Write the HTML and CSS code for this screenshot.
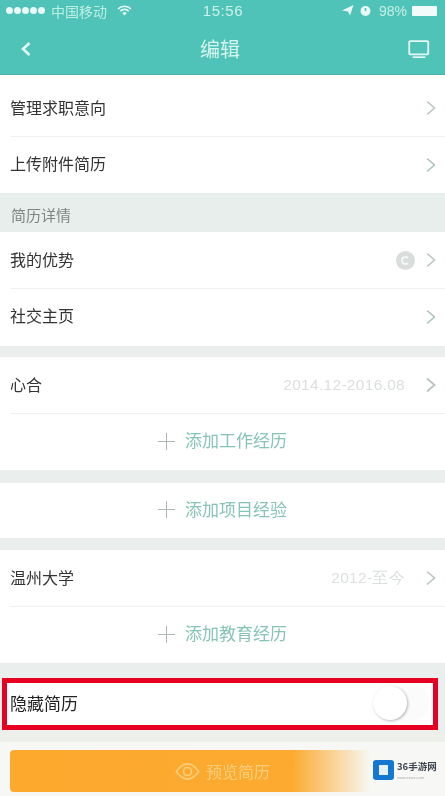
FILE: index.html
```html
<!DOCTYPE html>
<html lang="zh">
<head>
<meta charset="utf-8">
<title>编辑</title>
<link rel="stylesheet" href="styles.css">
</head>
<body>
<div class="page">
  <header class="top">
    <div class="status">
      <div class="status-left">
        <span class="dots"><i></i><i></i><i></i><i></i><i></i></span>
        <span class="carrier">中国移动</span>
        <svg class="wifi" width="15" height="11" viewBox="0 0 15 11"><path d="M1 4a9 9 0 0 1 13 0M3.2 6.2a6 6 0 0 1 8.6 0" fill="none" stroke="#e4f7f3" stroke-width="1.6"/><path d="M5.3 8.2a3 3 0 0 1 4.4 0L7.5 10.5z" fill="#e4f7f3"/></svg>
      </div>
      <span class="clock">15:56</span>
      <div class="status-right">
        <svg width="12" height="11" viewBox="0 0 12 11"><path d="M0 5.5 11.5 0 8 10.5 6 6.5z" fill="#e8f8f5"/></svg>
        <svg width="11" height="12" viewBox="0 0 11 12"><circle cx="5.5" cy="6" r="5" fill="#e8f8f5"/><path d="M5.5 3v3" stroke="#4fc2b6" stroke-width="1.6"/></svg>
        <span class="pct">98%</span>
        <span class="battery"></span>
      </div>
    </div>
    <div class="nav">
      <svg width="12" height="16" viewBox="0 0 12 16"><path d="M9.5 2 3 8l6.500 6" fill="none" stroke="#e6f8f5" stroke-width="2.6"/></svg>
      <h1 class="title">编辑</h1>
      <svg width="22" height="19" viewBox="0 0 24 21"><rect x="1.2" y="1.2" width="21" height="14.6" rx="1" fill="none" stroke="#e6f8f5" stroke-width="2"/><path d="M5 19h14" stroke="#e6f8f5" stroke-width="1.8"/></svg>
    </div>
  </header>

  <section class="group g1">
    <div class="row"><span class="label">管理求职意向</span><svg class="chev" width="10" height="16" viewBox="0 0 10 16"><path d="M1 1.500 8.500 8 1 14.500" fill="none" stroke="#b9c2c2" stroke-width="1.500"/></svg></div>
    <div class="row"><span class="label">上传附件简历</span><svg class="chev" width="10" height="16" viewBox="0 0 10 16"><path d="M1 1.500 8.500 8 1 14.500" fill="none" stroke="#a9c0c0" stroke-width="1.500"/></svg></div>
  </section>

  <div class="section-title">简历详情</div>

  <section class="group g2">
    <div class="row"><span class="label">我的优势</span><span class="right"><span class="warn"><span class="warn-in"></span></span><svg class="chev" width="10" height="16" viewBox="0 0 10 16"><path d="M1 1.500 8.500 8 1 14.500" fill="none" stroke="#b9c2c2" stroke-width="1.500"/></svg></span></div>
    <div class="row"><span class="label">社交主页</span><svg class="chev" width="10" height="16" viewBox="0 0 10 16"><path d="M1 1.500 8.500 8 1 14.500" fill="none" stroke="#a9c0c0" stroke-width="1.500"/></svg></div>
  </section>

  <section class="group gap-s">
    <div class="row"><span class="label">心合</span><span class="right"><span class="date">2014.12-2016.08</span><svg class="chev" width="10" height="16" viewBox="0 0 10 16"><path d="M1 1.500 8.500 8 1 14.500" fill="none" stroke="#b9c2c2" stroke-width="1.800"/></svg></span></div>
    <div class="row add"><span class="plus"></span><span class="add-text">添加工作经历</span></div>
  </section>

  <section class="group gap-m">
    <div class="row add single"><span class="plus"></span><span class="add-text">添加项目经验</span></div>
  </section>

  <section class="group gap-s2">
    <div class="row"><span class="label">温州大学</span><span class="right"><span class="date">2012-至今</span><svg class="chev" width="10" height="16" viewBox="0 0 10 16"><path d="M1 1.500 8.500 8 1 14.500" fill="none" stroke="#b9c2c2" stroke-width="1.500"/></svg></span></div>
    <div class="row add"><span class="plus"></span><span class="add-text">添加教育经历</span></div>
  </section>

  <div class="hide-row">
    <span class="label big">隐藏简历</span>
    <span class="toggle"><span class="knob"></span></span>
  </div>

  <footer class="bottom">
    <button class="preview">
      <svg width="25" height="19" viewBox="0 0 28 20"><path d="M1.500 10C6 3.500 10 1.500 14 1.500S22 3.500 26.500 10C22 16.500 18 18.500 14 18.500S6 16.500 1.500 10z" fill="none" stroke="#f8cf7d" stroke-width="1.800"/><circle cx="14" cy="10" r="4.500" fill="none" stroke="#f8cf7d" stroke-width="1.800"/></svg>
      <span>预览简历</span>
    </button>
    <div class="mark">
      <span class="mark-icon"><span class="cube"></span></span>
      <span class="mark-text"><b>36手游网</b><small>www.xxwz.com</small></span>
    </div>
  </footer>
</div>
</body>
</html>
```

FILE: styles.css
```css
* { box-sizing: border-box; }
html, body { margin: 0; padding: 0; }
body { font-family: "Noto Sans CJK SC", "Liberation Sans", sans-serif; background: #eaeeec; }
.page { width: 445px; height: 796px; overflow: hidden; display: flex; flex-direction: column; position: relative; background: #eaeeec; filter: blur(.5px); }

.top { height: 75px; background: #4fc3b7; border-bottom: 1px solid #46b4b4; box-shadow: 0 1px 0 #c5f0ee; color: #e6f8f5; flex: none; }
.status { height: 20px; padding: 1px 8px 0 6px; display: grid; grid-template-columns: 1fr auto 1fr; align-items: center; font-size: 12px; }
.status-left { display: flex; align-items: center; gap: 6px; }
.dots { display: flex; gap: 1px; }
.dots i { width: 7px; height: 7px; border-radius: 50%; background: #e8f8f5; display: block; }
.carrier { color: #bdeee6; font-size: 14px; line-height: 1; }
.wifi { margin-left: 4px; }
.clock { font-family: "Liberation Sans", sans-serif; font-size: 15px; color: #cdf1eb; letter-spacing: .6px; margin-left: 3px; }
.status-right { display: flex; justify-content: flex-end; align-items: center; gap: 6px; }
.pct { font-family: "Liberation Sans", sans-serif; font-size: 14px; color: #c4eee7; margin-left: 2px; }
.battery { width: 25px; height: 10px; background: #f2fbf9; border-radius: 1px; margin-left: -1px; }

.nav { height: 54px; display: flex; align-items: center; justify-content: space-between; padding: 4px 15px 0 20px; }
.title { margin: 0 0 2px; font-size: 20px; font-weight: 400; color: #d8f4ef; }

.group { background: #fff; flex: none; }
.g1 { padding-top: 5px; }
.g2 { padding-bottom: 1px; }
.row { height: 57px; margin-left: 10px; padding-right: 9px; display: flex; align-items: center; justify-content: space-between; border-top: 1px solid #eef1f0; }
.row:first-child { height: 56px; border-top: 0; margin-left: 0; padding-left: 10px; }
.label { font-size: 16px; color: #333; line-height: 1; margin-bottom: 2px; }
.row + .row .label { margin-bottom: 4px; }
.right { display: flex; align-items: center; }
.chev { display: block; }
.warn { width: 19px; height: 19px; border-radius: 50%; background: #d9dddc; margin-right: 11px; display: flex; align-items: center; justify-content: center; }
.warn-in { width: 9px; height: 9px; border-radius: 50%; border: 2px solid #f4f6f5; border-right-color: transparent; }
.date { font-family: "Liberation Sans", sans-serif; font-size: 15.500px; color: #dcdfdf; margin-right: 21px; letter-spacing: .3px; }

.add { justify-content: center; padding: 0 10px 0 0; gap: 10px; }
.add.single { margin-left: 0; padding: 0; height: 55px; border-top: 0; }
.plus { width: 17px; height: 17px; position: relative; display: block; margin-bottom: 2px; }
.plus::before, .plus::after { content: ""; position: absolute; background: #aab8b4; }
.plus::before { left: 0; right: 0; top: 8px; height: 1px; }
.plus::after { top: 0; bottom: 0; left: 8px; width: 1px; }
.add-text { font-size: 17px; color: #86c4b6; line-height: 1; margin-bottom: 5px; }

.section-title { height: 39px; padding: 8px 0 0 11px; font-size: 15px; line-height: 28px; color: #7d8584; background: #e8eeec; flex: none; }
.gap-s { margin-top: 11px; }
.gap-m { margin-top: 13px; }
.gap-s2 { margin-top: 12px; }

.hide-row { margin: 15px 7px 0 2px; height: 52px; flex: none; background: #fff; border: 5px solid #e60022; display: flex; align-items: center; justify-content: space-between; padding: 0 3px 0 3px; }
.label.big { font-size: 17px; color: #222; margin-bottom: 4px; }
.toggle { width: 57px; height: 34px; border-radius: 17px; background: #fbfbfb; display: block; position: relative; margin-bottom: 2px; }
.knob { position: absolute; left: 0; top: 0; width: 34px; height: 34px; border-radius: 50%; background: #fff; box-shadow: 1px 1px 3px rgba(0, 0, 0, .28); display: block; }

.bottom { flex: 1; display: flex; align-items: flex-start; padding: 20px 0 0 10px; position: relative; background: linear-gradient(180deg, #ecefea 12px, #f7f8f5 12px); }
.preview { width: 435px; height: 42px; border: 0; border-radius: 4px 0 0 4px; background: linear-gradient(90deg, #fca92e 0, #fcab30 65%, #f7f8f5 83%); color: #f8cf7d; font: 400 16px "Noto Sans CJK SC", sans-serif; display: flex; align-items: center; justify-content: flex-start; gap: 6px; padding: 0 0 0 165px; }

.mark { position: absolute; left: 373px; top: 29px; display: flex; align-items: center; gap: 3px; }
.mark-icon { width: 21px; height: 20px; border-radius: 3px; background: #1477d1; display: flex; align-items: center; justify-content: center; }
.cube { width: 9px; height: 10px; background: #e6f1fb; display: block; }
.mark-text { display: flex; flex-direction: column; line-height: 1; }
.mark-text b { font: 700 9.500px "Noto Sans CJK SC", sans-serif; color: #3c4650; white-space: nowrap; }
.mark-text small { font: 400 4px "Liberation Sans", sans-serif; color: #a7adb3; margin-top: 2px; }
```
